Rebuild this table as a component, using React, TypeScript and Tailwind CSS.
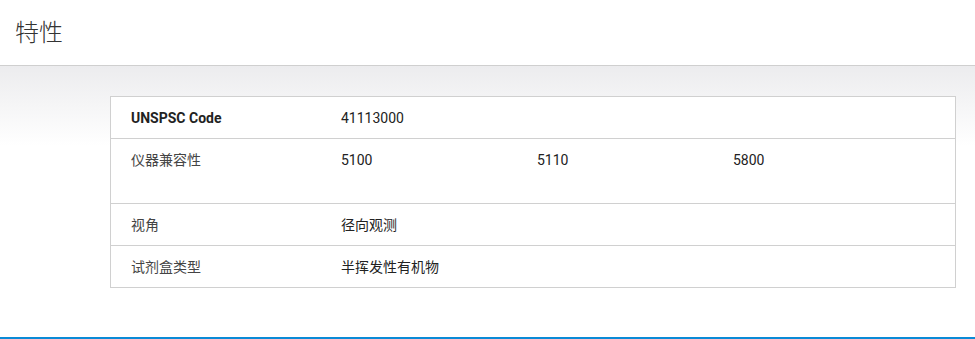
import React from 'react';

interface SpecRow {
  label: string;
  values: string[];
  bold?: boolean;
  tall?: boolean;
}

const rows: SpecRow[] = [
  { label: 'UNSPSC Code', values: ['41113000'], bold: true },
  { label: '仪器兼容性', values: ['5100', '5110', '5800'], tall: true },
  { label: '视角', values: ['径向观测'] },
  { label: '试剂盒类型', values: ['半挥发性有机物'] },
];

const App: React.FC = () => {
  return (
    <div className="w-full min-h-[339px] bg-white font-['Roboto','Noto_Sans_CJK_SC',sans-serif] text-[14px]">
      {/* Section heading */}
      <div className="h-[66px] flex items-center px-[15px] border-b border-[#cfcfcf]">
        <h2 className="text-[24px] font-light text-[#333] leading-none">特性</h2>
      </div>

      {/* Attribute table */}
      <div className="bg-gradient-to-b from-[#ececee] to-white to-[80px] pt-[30px] pb-[49px] pl-[110px] pr-[19px] border-b-2 border-[#0a8ad6]">
        <div className="bg-white border border-[#d0d0d0]">
          {rows.map((row, i) => {
            const last = i === rows.length - 1;
            return (
              <div
                key={row.label}
                className={`flex ${
                  row.tall ? 'h-[65px] items-start pt-[11px]' : last ? 'h-[41px] items-center' : 'h-[42px] items-center'
                } ${last ? '' : 'border-b border-[#d0d0d0]'}`}
              >
                <div
                  className={`w-[230px] pl-[20px] leading-[20px] ${
                    row.bold ? 'font-bold text-[#222]' : 'text-[#444]'
                  }`}
                >
                  {row.label}
                </div>
                <div className="flex leading-[20px] text-[#222]">
                  {row.values.map((v) => (
                    <div key={v} className="w-[196px]">
                      {v}
                    </div>
                  ))}
                </div>
              </div>
            );
          })}
        </div>
      </div>
    </div>
  );
};

export default App;
